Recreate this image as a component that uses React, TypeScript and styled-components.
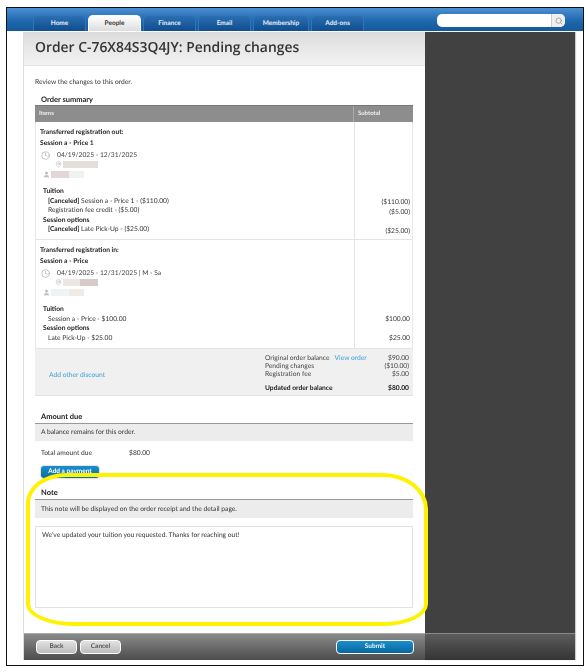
import React from 'react';
import styled, { createGlobalStyle } from 'styled-components';
import { Search, Clock, MapPin, User } from 'lucide-react';

const GlobalStyle = createGlobalStyle`
  html, body {
    margin: 0;
    padding: 0;
    background: #fff;
    font-family: "Lato", "Liberation Sans", sans-serif;
    color: #333;
    text-rendering: geometricPrecision;
  }
`;

const Frame = styled.div`
  position: relative;
  box-sizing: border-box;
  width: 578px;
  height: 659px;
  margin: 7px 0 0 6px;
  border: 1px solid #111;
  display: flex;
  flex-direction: column;
  filter: blur(0.3px);
`;

const TopBar = styled.div`
  height: 23px;
  flex: none;
  background: linear-gradient(180deg, #4b90d2 0%, #1f69ad 55%, #14599c 100%);
  display: flex;
  align-items: flex-end;
  justify-content: space-between;
  padding: 0 18px 0 26px;
`;

const Tabs = styled.div`
  display: flex;
  gap: 2px;
`;

const Tab = styled.div<{ $active?: boolean; $w: number }>`
  width: ${p => p.$w}px;
  height: 16px;
  box-sizing: border-box;
  border: 1px solid ${p => (p.$active ? '#fff' : '#2f77ba')};
  border-bottom: 0;
  border-radius: 5px 5px 0 0;
  background: ${p =>
    p.$active
      ? 'linear-gradient(180deg, #fff 0%, #ddd 100%)'
      : 'linear-gradient(180deg, #2a6fb2 0%, #0f4d8e 100%)'};
  color: ${p => (p.$active ? '#333' : '#e8f0f8')};
  font-size: 6.5px;
  font-weight: 700;
  line-height: 15px;
  text-align: center;
`;

const SearchBox = styled.div`
  width: 128px;
  height: 13px;
  margin-bottom: 4px;
  border-radius: 5px;
  background: #fff;
  display: flex;
  justify-content: flex-end;
`;

const SearchButton = styled.div`
  width: 13px;
  background: #efefef;
  border-left: 1px solid #ccc;
  border-radius: 0 5px 5px 0;
  display: flex;
  align-items: center;
  justify-content: center;
  color: #888;
`;

const Columns = styled.div`
  flex: 1;
  display: flex;
  padding: 1px 8px 5px 16px;
  min-height: 0;
`;

const MainPanel = styled.div`
  width: 402px;
  flex: none;
  box-sizing: border-box;
  border-left: 1px solid #ddd;
  display: flex;
  flex-direction: column;
`;

const DarkPanel = styled.div`
  flex: 1;
  background: #414141;
  box-shadow: 1px 0 1px #ccc;
  display: flex;
  flex-direction: column;
  justify-content: flex-end;
`;

const TitleBar = styled.div`
  height: 34px;
  flex: none;
  box-sizing: border-box;
  background: linear-gradient(180deg, #dcdcdc 0%, #f3f3f3 100%);
  border-bottom: 1px solid #e4e4e4;
  padding-left: 11px;
  font-family: "Open Sans", sans-serif;
  font-size: 13.9px;
  font-weight: 600;
  line-height: 32px;
  color: #333;
`;

const Body = styled.div`
  flex: 1;
  padding: 0 10px 0 11px;
  display: flex;
  flex-direction: column;
  font-size: 6.7px;
  line-height: 10px;
`;

const Intro = styled.div`
  margin-top: 11px;
  height: 10px;
`;

const SectionTitle = styled.div<{ $top: number }>`
  margin-top: ${p => p.$top}px;
  padding-left: 6px;
  height: 11px;
  line-height: 11px;
  font-size: 7.5px;
  font-weight: 700;
  color: #222;
`;

const OrderTable = styled.div`
  width: 378px;
`;

const TableHead = styled.div`
  height: 17px;
  background: #8d8d8d;
  border-top: 1px solid #777;
  box-sizing: border-box;
  display: grid;
  grid-template-columns: 318px 60px;
  color: #eee;
  font-size: 6px;
  font-weight: 700;
  line-height: 16px;
`;

const HeadCell = styled.div<{ $divided?: boolean }>`
  padding-left: 4px;
  border-left: ${p => (p.$divided ? '1px solid #aaa' : '0')};
`;

const Row = styled.div<{ $h: number }>`
  height: ${p => p.$h}px;
  box-sizing: border-box;
  display: grid;
  grid-template-columns: 318px 60px;
  border-bottom: 1px solid #e4e4e4;
  border-left: 1px solid #e8e8e8;
  border-right: 1px solid #e8e8e8;
`;

const ItemCell = styled.div`
  padding: 5px 0 0 4px;
`;

const AmountCell = styled.div<{ $top: number }>`
  border-left: 1px solid #e4e4e4;
  padding: ${p => p.$top}px 4px 0 0;
  text-align: right;
`;

const Amount = styled.div<{ $gap?: number }>`
  height: 9.5px;
  line-height: 9.5px;
  margin-top: ${p => p.$gap ?? 0}px;
`;

const Strong = styled.div`
  font-weight: 700;
  height: 11px;
  line-height: 11px;
  color: #222;
`;

const Schedule = styled.div`
  display: grid;
  grid-template-columns: 12px 1fr;
  margin: 2px 0 0 1px;
  color: #999;
`;

const DateLine = styled.div`
  height: 9px;
  line-height: 9px;
  padding-left: 4px;
  color: #444;
`;

const InfoLine = styled.div<{ $indent: number; $h: number }>`
  display: flex;
  align-items: center;
  gap: 1px;
  height: ${p => p.$h}px;
  margin-left: ${p => p.$indent}px;
  color: #bbb;
`;

const BlurGroup = styled.span`
  display: flex;
`;

const Blur = styled.span<{ $w: number; $c: string }>`
  display: block;
  width: ${p => p.$w}px;
  height: 7px;
  background: ${p => p.$c};
`;

const DetailHead = styled.div<{ $top?: number }>`
  font-weight: 700;
  color: #222;
  height: 9.5px;
  line-height: 9.5px;
  padding-left: 3px;
  margin-top: ${p => p.$top ?? 0}px;
`;

const DetailLine = styled.div`
  height: 9.5px;
  line-height: 9.5px;
  padding-left: 8px;
`;

const Cancelled = styled.b`
  color: #222;
`;

const Summary = styled.div`
  height: 47px;
  background: #f0f0f0;
  border-bottom: 1px solid #e4e4e4;
  box-sizing: border-box;
  display: grid;
  grid-template-columns: 230px 144px;
`;

const Link = styled.a`
  color: #3c9fd6;
`;

const DiscountLink = styled.div`
  padding: 21px 0 0 14px;
`;

const SummaryList = styled.div`
  padding-top: 5px;
`;

const SummaryRow = styled.div<{ $bold?: boolean; $gap?: number }>`
  display: flex;
  justify-content: space-between;
  height: 8px;
  line-height: 8px;
  margin-top: ${p => p.$gap ?? 0}px;
  font-weight: ${p => (p.$bold ? 700 : 400)};
  color: ${p => (p.$bold ? '#222' : '#444')};
`;

const SummaryLabel = styled.span`
  display: flex;
  gap: 5px;
`;

const RuledTitle = styled.div<{ $top: number }>`
  margin-top: ${p => p.$top}px;
  width: 378px;
  height: 13px;
  box-sizing: border-box;
  border-bottom: 1px solid #999;
  padding-left: 6px;
  font-size: 7.5px;
  font-weight: 700;
  line-height: 11px;
  color: #222;
`;

const Notice = styled.div<{ $h: number }>`
  width: 378px;
  height: ${p => p.$h}px;
  line-height: ${p => p.$h}px;
  background: #ececec;
  padding-left: 6px;
  box-sizing: border-box;
`;

const TotalRow = styled.div`
  display: grid;
  grid-template-columns: 88px auto;
  justify-content: start;
  margin: 7px 0 0 6px;
`;

const AddButton = styled.div`
  width: 58px;
  height: 12px;
  margin: 8px 0 0 6px;
  border-radius: 3px;
  background: linear-gradient(180deg, #1a8fcb 0%, #0a6ca6 100%);
  box-shadow: 0 0 0 1px #e5e5e5;
  color: #fff;
  font-size: 6.5px;
  font-weight: 700;
  line-height: 12px;
  text-align: center;
`;

const NoteField = styled.div`
  margin-top: 8px;
  width: 378px;
  height: 82px;
  box-sizing: border-box;
  border: 1px solid #e2e2e2;
  padding: 3px 6px;
`;

const Footer = styled.div`
  height: 27px;
  flex: none;
  box-sizing: border-box;
  background: linear-gradient(180deg, #8a8a8a 0%, #4c4c4c 100%);
  border-top: 1px solid #aaa;
  display: flex;
  align-items: center;
  justify-content: space-between;
  padding: 0 11px 1px 12px;
`;

const FooterDark = styled.div`
  height: 27px;
  box-sizing: border-box;
  background: linear-gradient(180deg, #5c5c5c 0%, #343434 100%);
  border-top: 1px solid #8a8a8a;
`;

const FooterGroup = styled.div`
  display: flex;
  gap: 3px;
`;

const GreyButton = styled.div`
  width: 41px;
  height: 14px;
  box-sizing: border-box;
  border: 1px solid #fff;
  border-radius: 4px;
  background: linear-gradient(180deg, #e2e2e2 0%, #bcbcbc 100%);
  color: #555;
  font-size: 6.5px;
  font-weight: 700;
  line-height: 12px;
  text-align: center;
`;

const SubmitButton = styled.div`
  width: 78px;
  height: 14px;
  box-sizing: border-box;
  border: 1px solid #fff;
  border-radius: 4px;
  background: linear-gradient(180deg, #1b8ecb 0%, #07679f 100%);
  color: #e8f4fb;
  font-size: 6.5px;
  font-weight: 700;
  line-height: 12px;
  text-align: center;
`;

// yellow marker drawn over the note section of the screenshot
const Highlight = styled.div`
  position: absolute;
  left: 19px;
  top: 465px;
  width: 402px;
  height: 153px;
  box-sizing: border-box;
  border: 4px solid #fff200;
  border-radius: 40px 45px 45px 48px / 30px 36px 22px 22px;
  pointer-events: none;
`;

const tabs = [
  { label: 'Home', w: 53 },
  { label: 'People', w: 53, active: true },
  { label: 'Finance', w: 53 },
  { label: 'Email', w: 53 },
  { label: 'Membership', w: 56 },
  { label: 'Add-ons', w: 53 },
];

export default function App() {
  return (
    <>
      <GlobalStyle />
      <Frame>
        <TopBar>
          <Tabs>
            {tabs.map(t => (
              <Tab key={t.label} $w={t.w} $active={t.active}>
                {t.label}
              </Tab>
            ))}
          </Tabs>
          <SearchBox>
            <SearchButton>
              <Search size={8} />
            </SearchButton>
          </SearchBox>
        </TopBar>
        <Columns>
          <MainPanel>
            <TitleBar>Order C-76X84S3Q4JY: Pending changes</TitleBar>
            <Body>
              <Intro>Review the changes to this order.</Intro>
              <SectionTitle $top={7}>Order summary</SectionTitle>
              <OrderTable>
                <TableHead>
                  <HeadCell>Items</HeadCell>
                  <HeadCell $divided>Subtotal</HeadCell>
                </TableHead>
                <Row $h={118}>
                  <ItemCell>
                    <Strong>Transferred registration out:</Strong>
                    <Strong>Session a - Price 1</Strong>
                    <Schedule>
                      <Clock size={9} strokeWidth={1.5} />
                      <div>
                        <DateLine>04/19/2025 - 12/31/2025</DateLine>
                        <InfoLine $indent={2} $h={9}>
                          <MapPin size={7} />
                          <Blur $w={35} $c="#e6dedb" />
                        </InfoLine>
                      </div>
                    </Schedule>
                    <InfoLine $indent={3} $h={11}>
                      <User size={7} fill="#bbb" />
                      <BlurGroup>
                        <Blur $w={18} $c="#e4d5d7" />
                        <Blur $w={15} $c="#eef3f2" />
                      </BlurGroup>
                    </InfoLine>
                    <DetailHead $top={7}>Tuition</DetailHead>
                    <DetailLine>
                      <Cancelled>[Canceled]</Cancelled> Session a - Price 1 - ($110.00)
                    </DetailLine>
                    <DetailLine>Registration fee credit - ($5.00)</DetailLine>
                    <DetailHead>Session options</DetailHead>
                    <DetailLine>
                      <Cancelled>[Canceled]</Cancelled> Late Pick-Up - ($25.00)
                    </DetailLine>
                  </ItemCell>
                  <AmountCell $top={76}>
                    <Amount>($110.00)</Amount>
                    <Amount>($5.00)</Amount>
                    <Amount $gap={9.5}>($25.00)</Amount>
                  </AmountCell>
                </Row>
                <Row $h={109}>
                  <ItemCell>
                    <Strong>Transferred registration in:</Strong>
                    <Strong>Session a - Price</Strong>
                    <Schedule>
                      <Clock size={9} strokeWidth={1.5} />
                      <div>
                        <DateLine>04/19/2025 - 12/31/2025 | M - Sa</DateLine>
                        <InfoLine $indent={2} $h={9}>
                          <MapPin size={7} />
                          <BlurGroup>
                            <Blur $w={17} $c="#ece6e4" />
                            <Blur $w={18} $c="#d6cacb" />
                          </BlurGroup>
                        </InfoLine>
                      </div>
                    </Schedule>
                    <InfoLine $indent={3} $h={11}>
                      <User size={7} fill="#bbb" />
                      <BlurGroup>
                        <Blur $w={18} $c="#eef4f6" />
                        <Blur $w={15} $c="#f0ebe7" />
                      </BlurGroup>
                    </InfoLine>
                    <DetailHead $top={7}>Tuition</DetailHead>
                    <DetailLine>Session a - Price - $100.00</DetailLine>
                    <DetailHead>Session options</DetailHead>
                    <DetailLine>Late Pick-Up - $25.00</DetailLine>
                  </ItemCell>
                  <AmountCell $top={75}>
                    <Amount>$100.00</Amount>
                    <Amount $gap={9.5}>$25.00</Amount>
                  </AmountCell>
                </Row>
                <Summary>
                  <DiscountLink>
                    <Link>Add other discount</Link>
                  </DiscountLink>
                  <SummaryList>
                    <SummaryRow>
                      <SummaryLabel>
                        Original order balance <Link>View order</Link>
                      </SummaryLabel>
                      <span>$90.00</span>
                    </SummaryRow>
                    <SummaryRow>
                      <span>Pending changes</span>
                      <span>($10.00)</span>
                    </SummaryRow>
                    <SummaryRow>
                      <span>Registration fee</span>
                      <span>$5.00</span>
                    </SummaryRow>
                    <SummaryRow $bold $gap={6}>
                      <span>Updated order balance</span>
                      <span>$80.00</span>
                    </SummaryRow>
                  </SummaryList>
                </Summary>
              </OrderTable>
              <RuledTitle $top={15}>Amount due</RuledTitle>
              <Notice $h={17}>A balance remains for this order.</Notice>
              <TotalRow>
                <span>Total amount due</span>
                <span>$80.00</span>
              </TotalRow>
              <AddButton>Add a payment</AddButton>
              <RuledTitle $top={9}>Note</RuledTitle>
              <Notice $h={18}>This note will be displayed on the order receipt and the detail page.</Notice>
              <NoteField>We've updated your tuition you requested. Thanks for reaching out!</NoteField>
            </Body>
            <Footer>
              <FooterGroup>
                <GreyButton>Back</GreyButton>
                <GreyButton>Cancel</GreyButton>
              </FooterGroup>
              <SubmitButton>Submit</SubmitButton>
            </Footer>
          </MainPanel>
          <DarkPanel>
            <FooterDark />
          </DarkPanel>
        </Columns>
        <Highlight />
      </Frame>
    </>
  );
}
